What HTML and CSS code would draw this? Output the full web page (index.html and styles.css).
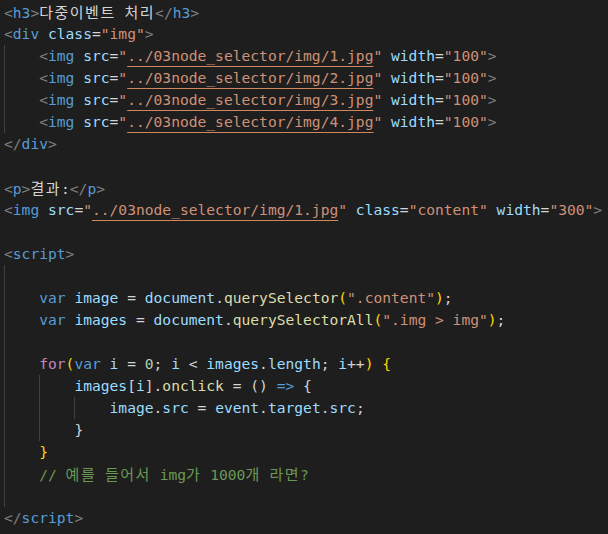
FILE: index.html
```html
<!DOCTYPE html>
<html lang="ko">
<head>
<meta charset="utf-8">
<title>다중이벤트 처리</title>
<link rel="stylesheet" href="styles.css">
</head>
<body>
<div class="editor">
  <div class="line"><span class="code"><span class="t">&lt;</span><span class="n">h3</span><span class="t">&gt;</span><span class="ko">다중이벤트</span> <span class="ko">처리</span><span class="t">&lt;/</span><span class="n">h3</span><span class="t">&gt;</span></span></div>
  <div class="line"><span class="code"><span class="t">&lt;</span><span class="n">div</span> <span class="a">class</span>=<span class="s">"img"</span><span class="t">&gt;</span></span></div>
  <div class="line"><span class="ind g"></span><span class="code"><span class="t">&lt;</span><span class="n">img</span> <span class="a">src</span>=<span class="s">"<span class="u">../03node_selector/img/1.jpg</span>"</span> <span class="a">width</span>=<span class="s">"100"</span><span class="t">&gt;</span></span></div>
  <div class="line"><span class="ind g"></span><span class="code"><span class="t">&lt;</span><span class="n">img</span> <span class="a">src</span>=<span class="s">"<span class="u">../03node_selector/img/2.jpg</span>"</span> <span class="a">width</span>=<span class="s">"100"</span><span class="t">&gt;</span></span></div>
  <div class="line"><span class="ind g"></span><span class="code"><span class="t">&lt;</span><span class="n">img</span> <span class="a">src</span>=<span class="s">"<span class="u">../03node_selector/img/3.jpg</span>"</span> <span class="a">width</span>=<span class="s">"100"</span><span class="t">&gt;</span></span></div>
  <div class="line"><span class="ind g"></span><span class="code"><span class="t">&lt;</span><span class="n">img</span> <span class="a">src</span>=<span class="s">"<span class="u">../03node_selector/img/4.jpg</span>"</span> <span class="a">width</span>=<span class="s">"100"</span><span class="t">&gt;</span></span></div>
  <div class="line"><span class="code"><span class="t">&lt;/</span><span class="n">div</span><span class="t">&gt;</span></span></div>
  <div class="line"></div>
  <div class="line"><span class="code"><span class="t">&lt;</span><span class="n">p</span><span class="t">&gt;</span><span class="ko">결과</span>:<span class="t">&lt;/</span><span class="n">p</span><span class="t">&gt;</span></span></div>
  <div class="line"><span class="code"><span class="t">&lt;</span><span class="n">img</span> <span class="a">src</span>=<span class="s">"<span class="u">../03node_selector/img/1.jpg</span>"</span> <span class="a">class</span>=<span class="s">"content"</span> <span class="a">width</span>=<span class="s">"300"</span><span class="t">&gt;</span></span></div>
  <div class="line"></div>
  <div class="line"><span class="code"><span class="t">&lt;</span><span class="n">script</span><span class="t">&gt;</span></span></div>
  <div class="line"><span class="ind g"></span></div>
  <div class="line"><span class="ind g"></span><span class="code"><span class="k">var</span> <span class="v">image</span> = <span class="v">document</span>.<span class="f">querySelector</span><span class="b1">(</span><span class="s">".content"</span><span class="b1">)</span>;</span></div>
  <div class="line"><span class="ind g"></span><span class="code"><span class="k">var</span> <span class="v">images</span> = <span class="v">document</span>.<span class="f">querySelectorAll</span><span class="b1">(</span><span class="s">".img &gt; img"</span><span class="b1">)</span>;</span></div>
  <div class="line"><span class="ind g"></span></div>
  <div class="line"><span class="ind g"></span><span class="code"><span class="p">for</span><span class="b1">(</span><span class="k">var</span> <span class="v">i</span> = <span class="num">0</span>; <span class="v">i</span> &lt; <span class="v">images</span>.<span class="v">length</span>; <span class="v">i</span>++<span class="b1">)</span> <span class="b1">{</span></span></div>
  <div class="line"><span class="ind g"></span><span class="ind g"></span><span class="code"><span class="v">images</span><span class="b2">[</span><span class="v">i</span><span class="b2">]</span>.<span class="f">onclick</span> = <span class="b2">()</span> <span class="k">=&gt;</span> <span class="b2">{</span></span></div>
  <div class="line"><span class="ind g"></span><span class="ind g"></span><span class="ind g"></span><span class="code"><span class="v">image</span>.<span class="v">src</span> = <span class="v">event</span>.<span class="v">target</span>.<span class="v">src</span>;</span></div>
  <div class="line"><span class="ind g"></span><span class="ind g"></span><span class="code"><span class="b2">}</span></span></div>
  <div class="line"><span class="ind g"></span><span class="code"><span class="b1">}</span></span></div>
  <div class="line"><span class="ind g"></span><span class="code c">// <span class="ko">예를</span> <span class="ko">들어서</span> img<span class="ko">가</span> 1000<span class="ko">개</span> <span class="ko">라면</span>?</span></div>
  <div class="line"><span class="ind g"></span></div>
  <div class="line"><span class="code"><span class="t">&lt;/</span><span class="n">script</span><span class="t">&gt;</span></span></div>
</div>
</body>
</html>
```

FILE: styles.css
```css
html, body {
  margin: 0;
  padding: 0;
  background: #1e1e1e;
}

.editor {
  padding: 1px 0 0 4px;
  font-family: "DejaVu Sans Mono", "Noto Sans CJK KR", monospace;
  font-size: 14.62px;
  color: #d4d4d4;
}

.line {
  display: flex;
  height: 22px;
  line-height: 22px;
  white-space: pre;
}

.ind {
  flex: 0 0 35.2px;
  box-sizing: border-box;
}

.ind.g {
  border-left: 1px solid #404040;
}

.code {
  white-space: pre;
}

.ko {
  font-family: "Noto Sans CJK KR", sans-serif;
  font-size: 15px;
  letter-spacing: 1.5px;
}

.t { color: #808080; }
.n { color: #569cd6; }
.a { color: #9cdcfe; }
.s { color: #ce9178; }
.u {
  text-decoration: underline;
  text-decoration-color: #d1875e;
  text-decoration-thickness: 1px;
  text-decoration-skip-ink: none;
  text-underline-offset: 5px;
}
.k { color: #569cd6; }
.v { color: #9cdcfe; }
.f { color: #dcdcaa; }
.p { color: #c586c0; }
.num { color: #b5cea8; }
.b1 { color: #ffd700; }
.b2 { color: #d4d4d4; }
.c { color: #6a9955; }
```
